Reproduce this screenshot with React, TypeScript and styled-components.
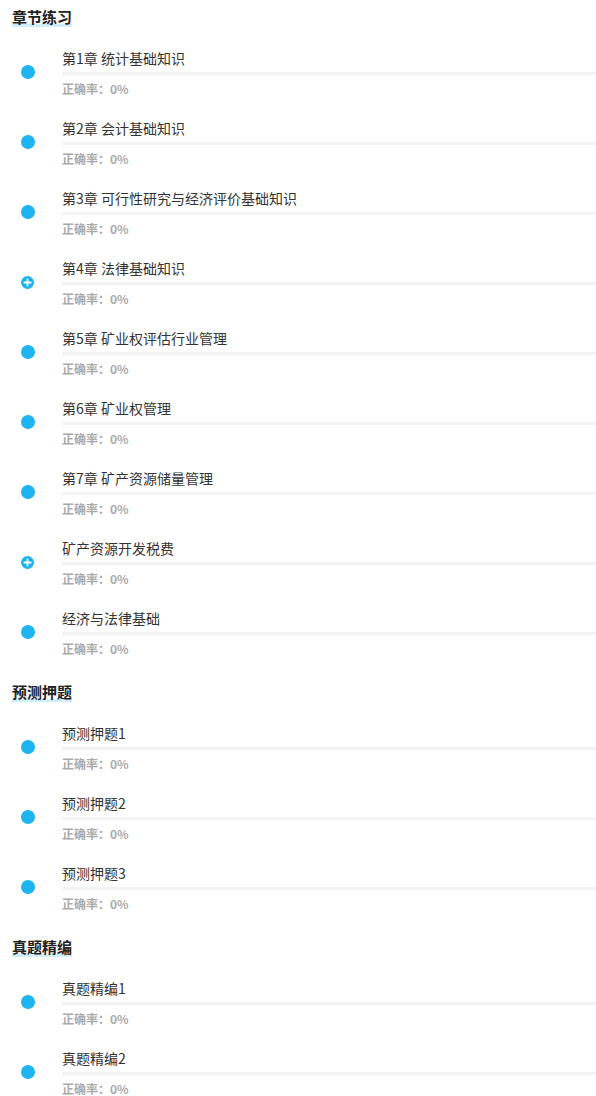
import { createGlobalStyle, styled } from "styled-components";

const GlobalStyle = createGlobalStyle`
  html, body {
    margin: 0;
    padding: 0;
    background: #fff;
  }
  body {
    font-family: "Noto Sans CJK SC", "Noto Sans", sans-serif;
    color: #333;
  }
`;

interface IItem {
  title: string;
  locked?: boolean;
}

interface ISection {
  title: string;
  items: IItem[];
}

const sections: ISection[] = [
  {
    title: "章节练习",
    items: [
      { title: "第1章 统计基础知识" },
      { title: "第2章 会计基础知识" },
      { title: "第3章 可行性研究与经济评价基础知识" },
      { title: "第4章 法律基础知识", locked: true },
      { title: "第5章 矿业权评估行业管理" },
      { title: "第6章 矿业权管理" },
      { title: "第7章 矿产资源储量管理" },
      { title: "矿产资源开发税费", locked: true },
      { title: "经济与法律基础" },
    ],
  },
  {
    title: "预测押题",
    items: [{ title: "预测押题1" }, { title: "预测押题2" }, { title: "预测押题3" }],
  },
  {
    title: "真题精编",
    items: [{ title: "真题精编1" }, { title: "真题精编2" }],
  },
];

const Page = styled.main`
  display: flex;
  flex-direction: column;
  gap: 7px;
  width: 596px;
`;

const Section = styled.section`
  display: flex;
  flex-direction: column;
`;

const SectionHeader = styled.div`
  height: 38px;
  box-sizing: border-box;
  padding: 4px 12px 0;
`;

const SectionTitle = styled.h2`
  display: inline-block;
  margin: 0;
  font-size: 15px;
  line-height: 20px;
  font-weight: 700;
  color: #222;
  background: linear-gradient(#cdeefb, #cdeefb) no-repeat left bottom / 100% 3px;
`;

const Row = styled.div`
  display: flex;
  align-items: center;
  height: 70px;
`;

const Marker = styled.div`
  width: 62px;
  flex: none;
  display: flex;
  align-items: center;
  padding-left: 21px;
  box-sizing: border-box;
  margin-top: -2px;
`;

const Dot = styled.span`
  width: 14px;
  height: 14px;
  border-radius: 50%;
  background: #1eb4ef;
`;

const PlusIcon = () => (
  <svg width="13" height="13" viewBox="0 0 13 13">
    <circle cx="6.5" cy="6.5" r="6.5" fill="#1eb4ef" />
    <path d="M6.5 3.4v6.2M3.4 6.5h6.2" stroke="#fff" strokeWidth="1.8" strokeLinecap="round" />
  </svg>
);

const Body = styled.div`
  flex: 1;
  display: flex;
  flex-direction: column;
`;

const ItemTitle = styled.div`
  font-size: 14px;
  line-height: 20px;
  color: #333;
  white-space: nowrap;
`;

const Divider = styled.div`
  height: 3px;
  margin: 4px 0 5px;
  background: #f3f3f3;
`;

const Rate = styled.div`
  font-size: 12px;
  line-height: 18px;
  font-weight: 700;
  color: #aaa;
`;

const Item = ({ item }: { item: IItem }) => (
  <Row>
    <Marker>{item.locked ? <PlusIcon /> : <Dot />}</Marker>
    <Body>
      <ItemTitle>{item.title}</ItemTitle>
      <Divider />
      <Rate>正确率：0%</Rate>
    </Body>
  </Row>
);

export default function App() {
  return (
    <>
      <GlobalStyle />
      <Page>
        {sections.map((section) => (
          <Section key={section.title}>
            <SectionHeader>
              <SectionTitle>{section.title}</SectionTitle>
            </SectionHeader>
            {section.items.map((item) => (
              <Item key={item.title} item={item} />
            ))}
          </Section>
        ))}
      </Page>
    </>
  );
}
